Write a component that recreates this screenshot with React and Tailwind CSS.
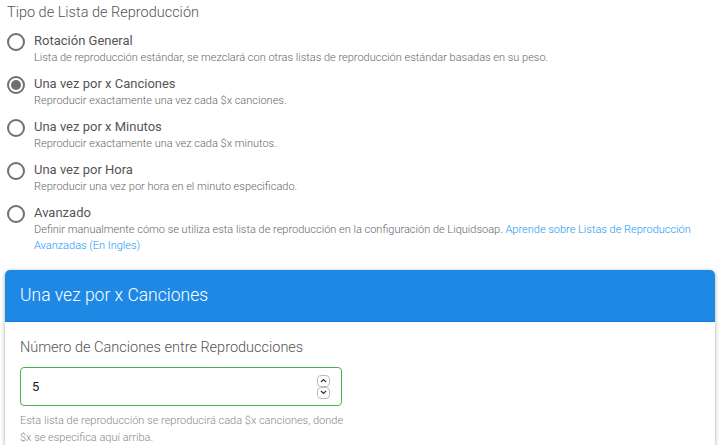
import React from 'react';

const options = [
    { label: 'Rotación General', desc: 'Lista de reproducción estándar, se mezclará con otras listas de reproducción estándar basadas en su peso.' },
    { label: 'Una vez por x Canciones', desc: 'Reproducir exactamente una vez cada $x canciones.', checked: true },
    { label: 'Una vez por x Minutos', desc: 'Reproducir exactamente una vez cada $x minutos.' },
    { label: 'Una vez por Hora', desc: 'Reproducir una vez por hora en el minuto especificado.' },
    { label: 'Avanzado', desc: 'Definir manualmente cómo se utiliza esta lista de reproducción en la configuración de Liquidsoap. ', link: 'Aprende sobre Listas de Reproducción Avanzadas (En Ingles)' },
];

const Radio = ({ checked }) => (
    <span className="mt-[2px] flex h-[18px] w-[18px] shrink-0 items-center justify-center rounded-full border-2 border-[#707070]">
        {checked && <span className="h-[10px] w-[10px] rounded-full bg-[#707070]" />}
    </span>
);

const App = () => {
    return (
        <div className="h-[445px] w-[720px] overflow-hidden bg-white" style={{ fontFamily: 'Roboto, "Liberation Sans", sans-serif' }}>
            <div className="px-[7px] pt-[3px]">
                <h3 className="text-[14.5px] font-light leading-[20px] text-[#555]">Tipo de Lista de Reproducción</h3>
                <div className="mt-[8px] flex flex-col gap-[8px]">
                    {options.map((o) => (
                        <div key={o.label} className="flex items-start gap-[9px]">
                            <Radio checked={o.checked} />
                            <div className="min-w-0">
                                <p className="text-[13px] leading-[20px] text-[#555]">{o.label}</p>
                                <p className="mt-[-1px] pr-[20px] text-[11px] font-light leading-[16px] text-[#666]">
                                    {o.desc}
                                    {o.link && <span className="text-[#2196f3]">{o.link}</span>}
                                </p>
                            </div>
                        </div>
                    ))}
                </div>
            </div>

            <div className="mx-[5px] mt-[16px] rounded-t-[5px] bg-white shadow-[0_1px_4px_rgba(0,0,0,0.35)]">
                <div className="flex h-[52px] items-center rounded-t-[5px] border-b border-[#1976d2] bg-[#1e88e5] px-[15px]">
                    <h2 className="text-[17.5px] font-light text-white">Una vez por x Canciones</h2>
                </div>
                <div className="px-[15px] pt-[17px] pb-4">
                    <label className="block text-[14.5px] font-light leading-[18px] text-[#555]">Número de Canciones entre Reproducciones</label>
                    <div className="mt-[10px] flex h-[39px] w-[322px] items-center justify-between rounded-[4px] border border-[#4caf50] pl-[11px] pr-[11px]">
                        <span className="text-[13px] text-[#222]">5</span>
                        <span className="flex flex-col">
                            <span className="flex h-[12px] w-[13px] items-center justify-center rounded-[4px] border border-[#bbb]">
                                <svg width="7" height="5" viewBox="0 0 7 5"><path d="M1 4 L3.5 1.5 L6 4" stroke="#333" fill="none" strokeWidth="1.2" /></svg>
                            </span>
                            <span className="flex h-[12px] w-[13px] items-center justify-center rounded-[4px] border border-[#bbb]">
                                <svg width="7" height="5" viewBox="0 0 7 5"><path d="M1 1 L3.5 3.5 L6 1" stroke="#333" fill="none" strokeWidth="1.2" /></svg>
                            </span>
                        </span>
                    </div>
                    <p className="mt-[6px] w-[330px] text-[11px] font-light leading-[17px] text-[#888]">
                        Esta lista de reproducción se reproducirá cada $x canciones, donde $x se especifica aquí arriba.
                    </p>
                </div>
            </div>
        </div>
    );
};

export default App;
